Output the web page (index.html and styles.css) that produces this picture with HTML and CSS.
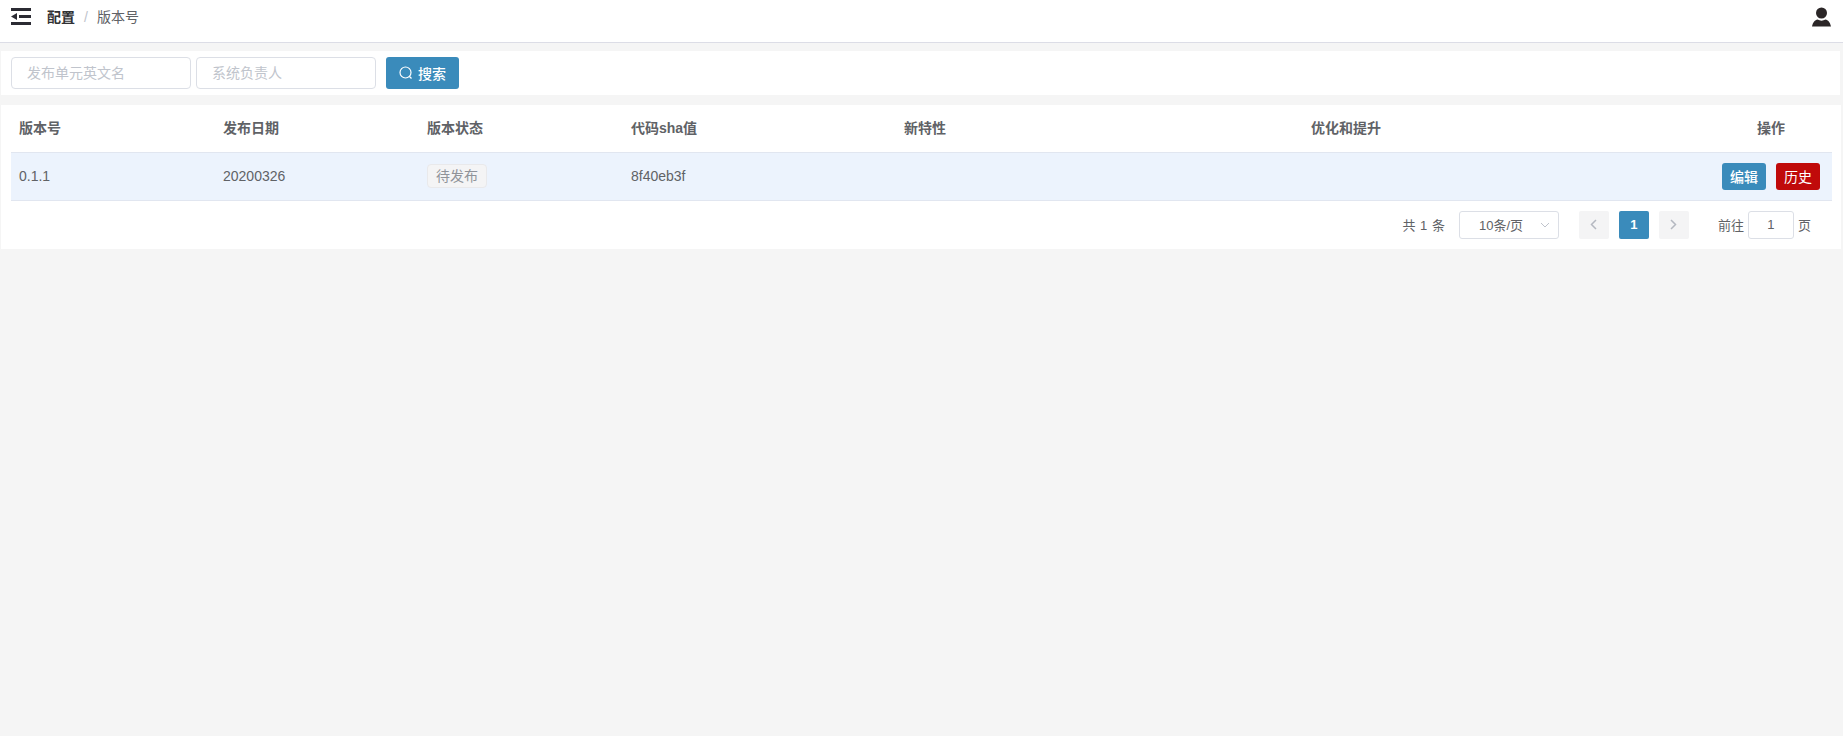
FILE: index.html
```html
<!DOCTYPE html>
<html lang="zh">
<head>
<meta charset="utf-8">
<title>版本号</title>
<link rel="stylesheet" href="styles.css">
</head>
<body>
<header class="topbar">
  <svg class="menu-icon" viewBox="0 0 20 17" width="20" height="17"><path d="M0 0h20v3H0zM0 14h20v3H0zM8 7h12v3H8zM0 8.500L6 5v7z" fill="#2b2b33"/></svg>
  <nav class="crumbs"><b>配置</b><span class="sep">/</span><span class="cur">版本号</span></nav>
  <svg class="user-icon" viewBox="0 0 19 20" width="19" height="20"><circle cx="9.500" cy="6" r="5.500" fill="#2b2627"/><path d="M0 19.500C1 15 3 13 5.500 12.500C8 14 11 14 13.500 12.500C16 13 18 15 19 19.500z" fill="#2b2627"/></svg>
</header>
<section class="search-panel">
  <input class="field" placeholder="发布单元英文名">
  <input class="field" placeholder="系统负责人">
  <button class="btn search-btn"><svg viewBox="0 0 14 14" width="14" height="14"><circle cx="6.500" cy="6.500" r="5.500" fill="none" stroke="#fff" stroke-width="1.200"/><path d="M10.500 10.500l2 2" stroke="#fff" stroke-width="1.200"/></svg>搜索</button>
</section>
<section class="table-panel">
  <table class="grid">
    <colgroup><col class="c1"><col class="c2"><col class="c3"><col class="c4"><col class="c5"><col class="c6"><col></colgroup>
    <thead><tr><th>版本号</th><th>发布日期</th><th>版本状态</th><th>代码sha值</th><th>新特性</th><th>优化和提升</th><th class="center">操作</th></tr></thead>
    <tbody><tr>
      <td>0.1.1</td><td>20200326</td><td><span class="tag">待发布</span></td><td>8f40eb3f</td><td></td><td></td>
      <td class="actions"><button class="btn small blue">编辑</button><button class="btn small red">历史</button></td>
    </tr></tbody>
  </table>
  <div class="pager">
    <span class="total">共 1 条</span>
    <div class="size">10条/页<svg viewBox="0 0 10 6" width="10" height="6"><path d="M1 1l4 4 4-4" fill="none" stroke="#c0c4cc"/></svg></div>
    <span class="page-btn"><svg viewBox="0 0 7 11" width="7" height="11"><path d="M6 1L1.500 5.500 6 10" fill="none" stroke="#b4b8c0" stroke-width="1.500"/></svg></span>
    <span class="page-btn active">1</span>
    <span class="page-btn"><svg viewBox="0 0 7 11" width="7" height="11"><path d="M1 1l4.500 4.500L1 10" fill="none" stroke="#b4b8c0" stroke-width="1.500"/></svg></span>
    <span class="goto">前往<input class="jump" value="1">页</span>
  </div>
</section>
</body>
</html>
```
FILE: styles.css
```css
* { box-sizing: border-box; }
html, body { margin: 0; height: 100%; }
body {
  background: #f5f5f5;
  color: #606266;
  font: 14px "Liberation Sans", "Noto Sans CJK SC", sans-serif;
  overflow: hidden;
}
.topbar {
  height: 43px;
  background: #fff;
  border-bottom: 1px solid #dcdde6;
  display: flex;
  align-items: flex-start;
  padding: 8px 11px 0;
}
.menu-icon { flex: none; }
.crumbs { margin-left: 16px; font-size: 14px; line-height: 18px; margin-top: 0; }
.crumbs b { color: #303133; }
.sep { color: #c0c4cc; margin: 0 9px; }
.cur { color: #606266; }
.user-icon { margin-left: auto; margin-right: 1px; margin-top: -1px; }
.search-panel {
  margin: 8px 3px 0 1px;
  height: 44px;
  background: #fff;
  display: flex;
  align-items: center;
  padding-left: 10px;
  gap: 5px;
}
.field {
  width: 180px;
  height: 32px;
  border: 1px solid #dcdfe6;
  border-radius: 4px;
  padding: 0 15px;
  font: inherit;
  font-size: 14px;
  outline: 0;
}
.field::placeholder { color: #c0c4cc; }
.btn {
  border: 0;
  border-radius: 3px;
  color: #fff;
  font: inherit;
  padding: 0;
}
.search-btn {
  margin-left: 5px;
  width: 73px;
  height: 32px;
  background: #3a8bbb;
  display: flex;
  align-items: center;
  justify-content: center;
  gap: 5px;
  font-weight: 500;
}
.table-panel {
  margin: 10px 2px 0 1px;
  height: 144px;
  background: #fff;
  padding: 0 9px 0 10px;
}
.grid { width: 100%; table-layout: fixed; border-collapse: collapse; font-size: 14px; }
.c1, .c2, .c3 { width: 204px; }
.c4 { width: 273px; }
.c5 { width: 407px; }
.c6 { width: 353px; }
.grid th { height: 47px; padding: 0 8px 2px; text-align: left; font-weight: 700; font-size: 14px; }
.grid th.center { text-align: center; padding-left: 62px; }
.grid td {
  height: 48px;
  padding: 0 8px;
  background: #ecf3fd;
  border-top: 1px solid #e1e6f0;
  border-bottom: 1px solid #e1e6f0;
}
.tag {
  display: inline-block;
  height: 24px;
  line-height: 22px;
  padding: 0 8px;
  background: #f4f4f5;
  border: 1px solid #e9e9eb;
  border-radius: 4px;
  color: #909399;
}
.actions { text-align: right; }
.actions.actions { padding-right: 12px; }
.small { width: 44px; height: 27px; font-size: 14px; margin-left: 10px; vertical-align: middle; }
.blue { background: #3a8bbb; font-weight: 500; }
.red { background: #c00a0a; }
.pager {
  display: flex;
  justify-content: flex-end;
  align-items: center;
  height: 48px;
  padding: 0 21px 0 0;
  font-size: 13px;
}
.total { margin-right: 14px; word-spacing: 1px; }
.size {
  width: 100px;
  height: 28px;
  border: 1px solid #dcdfe6;
  border-radius: 3px;
  padding-left: 19px;
  padding-right: 8px;
  display: flex;
  align-items: center;
  justify-content: space-between;
  margin-right: 20px;
}
.page-btn {
  width: 30px;
  height: 28px;
  background: #f4f4f5;
  border-radius: 2px;
  display: flex;
  align-items: center;
  justify-content: center;
  margin-right: 10px;
  font-weight: 700;
}
.active { background: #3a8bbb; color: #fff; }
.goto { margin-left: 19px; display: flex; align-items: center; }
.jump {
  width: 46px;
  height: 28px;
  margin: 0 4px;
  border: 1px solid #dcdfe6;
  border-radius: 3px;
  text-align: center;
  font: inherit;
  color: #606266;
  outline: 0;
}
```
